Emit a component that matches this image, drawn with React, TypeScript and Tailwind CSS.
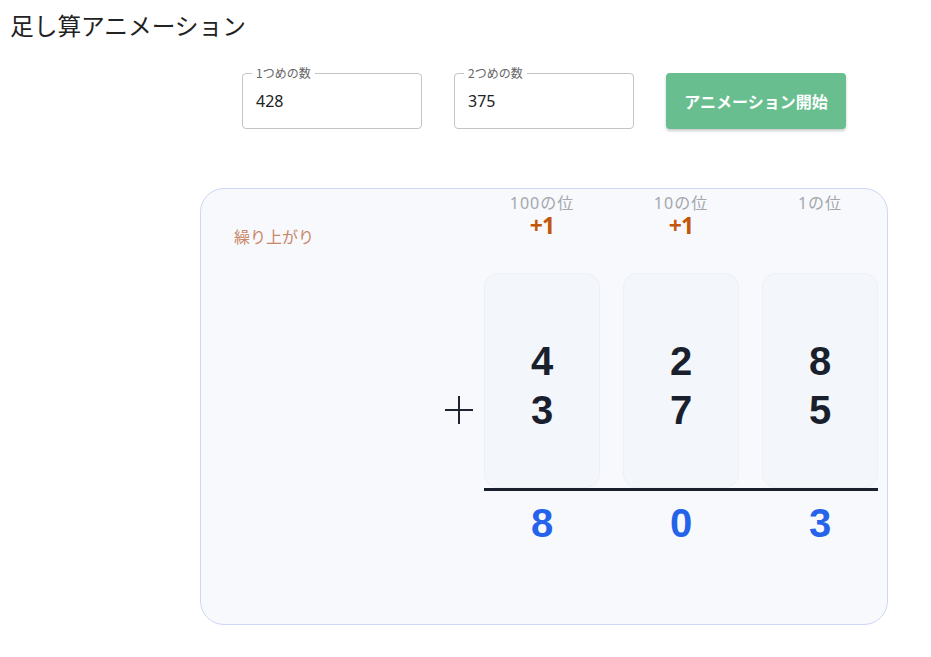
import React from "react";

const cols = [
  { label: "100の位", carry: "+1", a: "4", b: "3", r: "8" },
  { label: "10の位", carry: "+1", a: "2", b: "7", r: "0" },
  { label: "1の位", carry: "", a: "8", b: "5", r: "3" },
];

export default function App() {
  return (
    <div
      className="min-h-[657px] w-[931px] bg-white text-[#1f2937]"
      style={{ fontFamily: '"Noto Sans", "Noto Sans CJK JP", sans-serif' }}
    >
      <h1
        className="pl-[10px] pt-[9px] text-[23.7px] leading-[32px] font-normal text-[#222]"
        style={{ fontFamily: '"Noto Sans CJK JP", sans-serif' }}
      >
        足し算アニメーション
      </h1>
      <div className="ml-[200px] w-[688px]">
        <div className="mt-[32px] flex justify-center gap-[32px]">
          {[
            ["1つめの数", "428"],
            ["2つめの数", "375"],
          ].map(([label, value]) => (
            <div key={label} className="relative h-[56px] w-[180px] rounded-[4px] border border-[#c4c4c4]">
              <span
                className="absolute -top-[9px] left-[9px] bg-white px-[4px] text-[12px] leading-[16px] text-[#666]"
                style={{ fontFamily: '"Noto Sans CJK JP", sans-serif' }}
              >
                {label}
              </span>
              <div className="pl-[13px] pt-[15px] text-[16px] leading-[24px] text-[#222]">{value}</div>
            </div>
          ))}
          <button
            className="h-[56px] w-[180px] rounded-[4px] bg-[#69be8f] text-[16px] font-bold text-white shadow-[0_2px_3px_rgba(0,0,0,0.2)]"
            style={{ fontFamily: '"Noto Sans CJK JP", sans-serif' }}
          >
            アニメーション開始
          </button>
        </div>

        <div className="mt-[59px] h-[437px] rounded-[24px] border border-[#cdd6f6] bg-[#f8f9fc]">
          <div className="flex h-[59px]">
            <div
              className="w-[283px] pl-[33px] pt-[35px] text-[16px] leading-[24px] text-[#c9886a]"
              style={{ fontFamily: '"Noto Sans CJK JP", sans-serif' }}
            >
              繰り上がり
            </div>
            <div className="flex gap-[23px]">
              {cols.map((c) => (
                <div key={c.label} className="flex w-[116px] flex-col items-center">
                  <div className="pt-[5px] text-[16px] leading-[19px] tracking-[1px] text-[#a3a7ae]">{c.label}</div>
                  <div className="mt-[1px] h-[23px] text-[23px] font-bold leading-[23px] tracking-[-1px] text-[#c2570c]">
                    {c.carry}
                  </div>
                </div>
              ))}
            </div>
          </div>
          <div className="mt-[25px] flex">
            <div className="flex w-[283px] items-start justify-end pr-[11px]">
              <svg width="28" height="28" viewBox="0 0 28 28" className="mt-[123px]">
                <line x1="14" y1="0" x2="14" y2="28" stroke="#1e2433" strokeWidth="2" />
                <line x1="0" y1="14" x2="28" y2="14" stroke="#1e2433" strokeWidth="2" />
              </svg>
            </div>
            <div>
              <div className="flex gap-[23px]">
                {cols.map((c) => (
                  <div
                    key={c.label}
                    className="flex h-[215px] w-[116px] flex-col items-center justify-center rounded-[14px] border border-[#edf0f7] bg-[#f3f6fb] pt-[10px] text-[40px] font-bold leading-[49px] text-[#1a1f2e]"
                    style={{ fontFamily: '"Liberation Sans", Arial, sans-serif' }}
                  >
                    <div>{c.a}</div>
                    <div>{c.b}</div>
                  </div>
                ))}
              </div>
              <div className="h-[3px] w-[394px] bg-[#1a1f2e]" />
              <div className="flex gap-[23px] pt-[10px]">
                {cols.map((c) => (
                  <div
                    key={c.label}
                    className="w-[116px] text-center text-[40px] font-bold leading-[44px] text-[#2563eb]"
                    style={{ fontFamily: '"Liberation Sans", Arial, sans-serif' }}
                  >
                    {c.r}
                  </div>
                ))}
              </div>
            </div>
          </div>
        </div>
      </div>
    </div>
  );
}
